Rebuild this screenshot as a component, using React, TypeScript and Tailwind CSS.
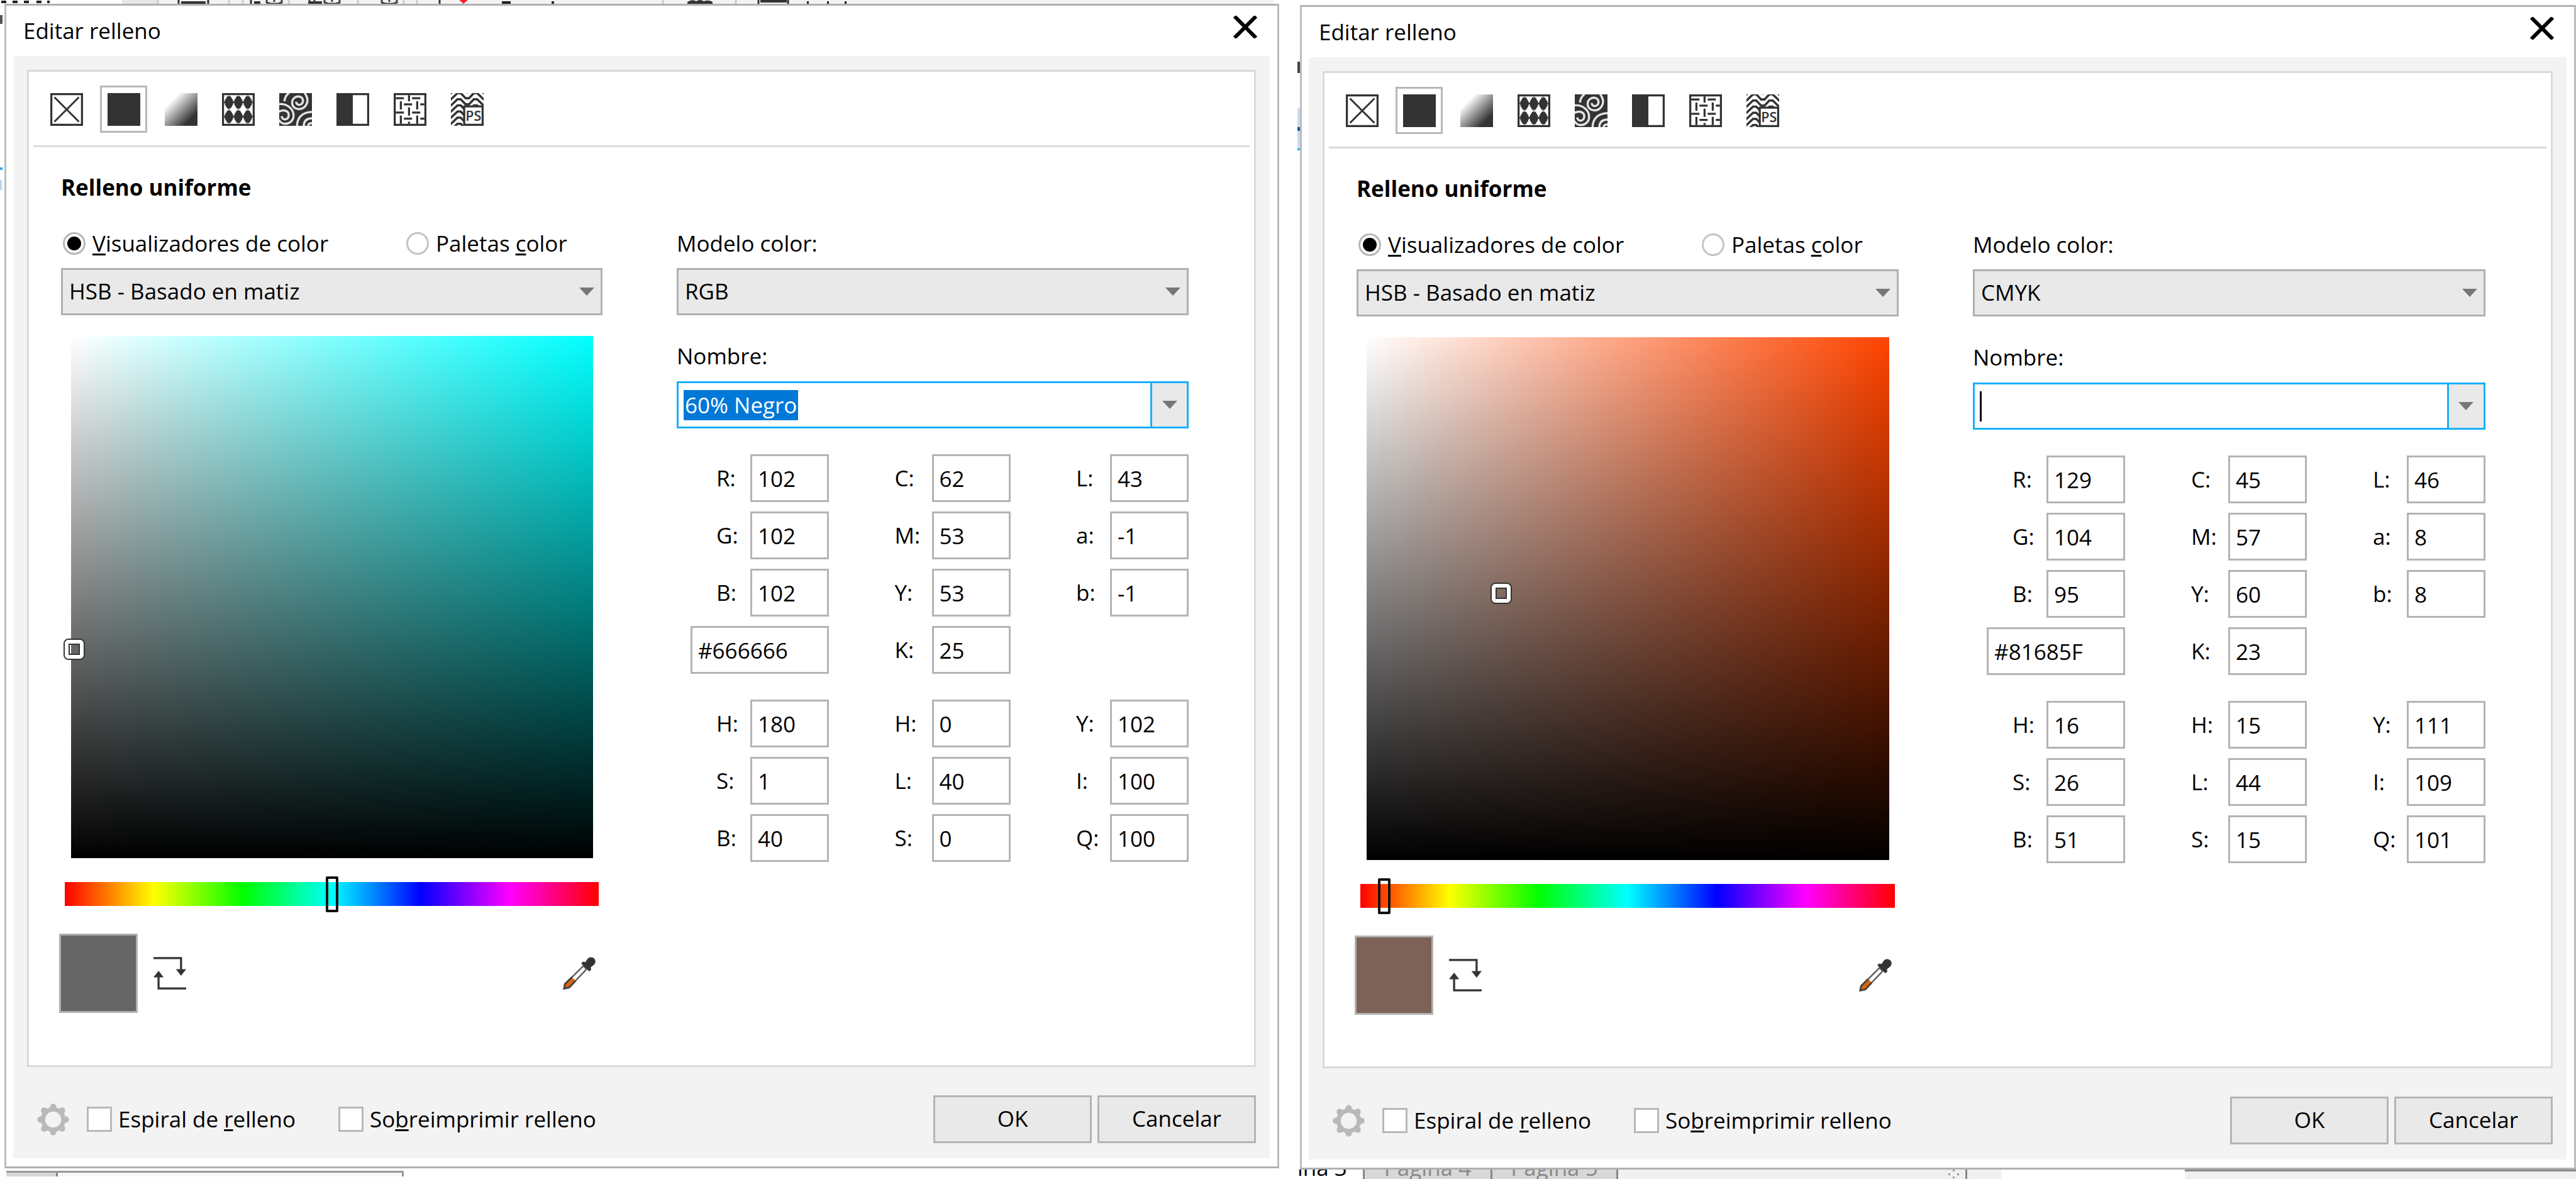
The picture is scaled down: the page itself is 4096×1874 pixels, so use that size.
import React, { useId } from 'react';

const DARK = '#333333';

type Field = { label: string; value: string };

type FillDialogProps = {
  model: string;
  name: string;
  hue: number;
  hueColor: string;
  saturation: number;
  brightness: number;
  swatch: string;
  hex: string;
  rgb: Field[];
  hsb: Field[];
  cmyk: Field[];
  hls: Field[];
  lab: Field[];
  yiq: Field[];
};

function NoFillIcon() {
  return (
    <svg viewBox="0 0 16 16" className="size-[52px]" fill="none" stroke={DARK}>
      <rect x="0.5" y="0.5" width="15" height="15" />
      <path d="M2 2 14 14M14 2 2 14" strokeWidth="0.9" />
    </svg>
  );
}

function UniformIcon() {
  return (
    <svg viewBox="0 0 16 16" className="size-[52px]">
      <rect width="16" height="16" fill={DARK} />
    </svg>
  );
}

function FountainIcon() {
  const id = useId();
  return (
    <svg viewBox="0 0 16 16" className="size-[52px]">
      <defs>
        <linearGradient id={id} x1="0" y1="0" x2="1" y2="1">
          <stop offset="0.22" stopColor="#ffffff" />
          <stop offset="0.5" stopColor="#9a9a9a" />
          <stop offset="0.8" stopColor={DARK} />
        </linearGradient>
      </defs>
      <rect width="16" height="16" fill={`url(#${id})`} />
    </svg>
  );
}

function VectorPatternIcon() {
  const xs = [3.4, 8, 12.6];
  const ys = [4.5, 11.5];
  return (
    <svg viewBox="0 0 16 16" className="size-[52px]">
      <rect x="0.5" y="0.5" width="15" height="15" fill="none" stroke={DARK} />
      {xs.map((x) =>
        ys.map((y) => (
          <path
            key={`${x}-${y}`}
            d={`M${x - 0.8} ${y - 3}h1.6L${x + 2} ${y - 1}v2L${x + 0.8} ${y + 3}h-1.6L${x - 2} ${y + 1}v-2z`}
            fill={DARK}
          />
        )),
      )}
      <path d="M1 4.5h14M1 11.5h14" stroke={DARK} strokeWidth="0.9" />
      <path d="M3.4 1v14M8 1v14M12.6 1v14" stroke={DARK} strokeWidth="0.8" opacity="0.45" />
    </svg>
  );
}

function BitmapPatternIcon() {
  return (
    <svg viewBox="0 0 16 16" className="size-[52px] overflow-hidden" fill="none" stroke="#e4e4e4" strokeWidth="1.05">
      <rect width="16" height="16" fill={DARK} stroke="none" />
      <path d="M2.6 4C2.6 2.4 3.4 1 4.8-.2" />
      <path d="M8.3 4.2c0 1.2 1.3 1.9 2.3 1.3 1.5-.9 1.3-3.1-.3-3.7-2-.7-4 .9-4 2.8 0 2.1 1.7 3.4 3.7 3.2 2.8-.2 4.4-3.2 3.6-5.6C13.3 1.2 12.9.6 12.4-.2" />
      <path d="M-.2 5.4C4 5 7 7.8 7 11c0 2.500-2 4-4 4-1.600 0-2.600-.8-3.200-2" />
      <path d="M1.200 11.300c.1 1.300 1.500 2 2.500 1.300C5 11.700 5 9.600 3.500 8.800 2.300 8.200 1 8.400-.2 9.100" />
      <path d="M8.700 16.200c0-4.400 2.800-7 7.500-7M12 16.200c0-2.500 1.300-3.900 4.200-3.900M14.100 16.200c0-1 .9-1.500 2.100-1.500" />
    </svg>
  );
}

function TwoColorIcon() {
  return (
    <svg viewBox="0 0 16 16" className="size-[52px]">
      <rect x="0.5" y="0.5" width="15" height="15" fill="#ffffff" stroke={DARK} />
      <rect width="8" height="16" fill={DARK} />
    </svg>
  );
}

function TextureIcon() {
  return (
    <svg viewBox="0 0 16 16" className="size-[52px]" fill="none" stroke={DARK}>
      <rect x="0.5" y="0.5" width="15" height="15" />
      <path d="M1 2.500h4M9 2.500h4M5 5.500h4M13 5.500h2M1 9.500h4M9 9.500h4M5 12.500h4M13 12.500h2" />
      <path d="M3.500 4v4M3.500 11v4M7.500 1v3M7.500 7v4M7.500 14v1M11.500 4v4M11.500 11v4" />
    </svg>
  );
}

function PostScriptIcon() {
  const rows = [-1, 2, 5, 8, 11, 14, 17];
  return (
    <svg viewBox="0 0 16 16" className="size-[52px] overflow-hidden">
      {rows.map((y) => (
        <path
          key={y}
          d={`M-1 ${y + 2}L3.2 ${y - 2}h1.6L7.2 ${y + 0.5}h1.6L11.2 ${y - 2}h1.6L17 ${y + 2}`}
          fill="none"
          stroke={DARK}
          strokeWidth="1.1"
        />
      ))}
      <rect x="6.5" y="6.5" width="9" height="9" fill="#ffffff" stroke={DARK} />
      <text x="11" y="13.4" textAnchor="middle" fontSize="6.6" fontFamily="Open Sans" fontWeight="600" fill={DARK}>
        PS
      </text>
    </svg>
  );
}

function SwapIcon() {
  return (
    <svg viewBox="0 0 16 16" className="size-[52px]">
      <path d="M0 .6h13.500V7M16 15.400H2.500V9" fill="none" stroke={DARK} strokeWidth="1" />
      <path d="M11 6h5l-2.500 3.200zM0 10h5L2.500 6.800z" fill={DARK} />
    </svg>
  );
}

function DropperIcon() {
  return (
    <svg viewBox="0 0 16 16" className="size-[52px]">
      <path d="M10 4.400 11.600 6 3.400 14.600 1 15.200 1.400 13z" fill="#ffffff" stroke="#666666" strokeWidth="0.8" />
      <path d="M4.400 9.900 6.200 11.600 3.200 14.700 1 15.200 1.400 13z" fill="#e0640e" />
      <path d="M4.400 9.900 1 13.300.6 15.500 3.100 15 6.200 11.600" fill="none" stroke="#444444" strokeWidth="0.9" />
      <path
        d="M9 3.200 9.700 2.300 11 2.500 12.100.9C12.900-.1 14.500-.1 15.300.8c.9.9.8 2.300-.2 3.100L13.700 5l.1 1.400-.9.7z"
        fill={DARK}
      />
    </svg>
  );
}

function GearIcon() {
  const angles = [0, 45, 90, 135, 180, 225, 270, 315];
  return (
    <svg viewBox="0 0 16 16" className="size-[51px]">
      <circle cx="8" cy="8" r="5.1" fill="none" stroke="#b9b9b9" strokeWidth="2.2" />
      {angles.map((a) => (
        <path key={a} d="M6 3.200 6.700.8Q8-.7 9.300.8L10 3.200z" fill="#b9b9b9" transform={`rotate(${a} 8 8)`} />
      ))}
    </svg>
  );
}

function Arrow() {
  return (
    <svg viewBox="0 0 24 13" className="h-[13px] w-[24px]">
      <path d="M0 0h24L12 13z" fill="#777777" />
    </svg>
  );
}

const fillTypes = [
  { name: 'Sin relleno', Icon: NoFillIcon },
  { name: 'Relleno uniforme', Icon: UniformIcon },
  { name: 'Relleno degradado', Icon: FountainIcon },
  { name: 'Relleno de patrón vectorial', Icon: VectorPatternIcon },
  { name: 'Relleno de patrón de mapa de bits', Icon: BitmapPatternIcon },
  { name: 'Relleno de patrón de dos colores', Icon: TwoColorIcon },
  { name: 'Relleno de textura', Icon: TextureIcon },
  { name: 'Relleno PostScript', Icon: PostScriptIcon },
];

function SelectBox({ id, label, value }: { id: string; label?: string; value: string }) {
  return (
    <div className="relative flex items-center">
      <select
        id={id}
        aria-label={label}
        defaultValue={value}
        className="h-[75px] w-full appearance-none border-3 border-[#b0b0b0] bg-[#e9e9e9] px-[10px] pb-[2px]"
      >
        <option>{value}</option>
      </select>
      <span className="pointer-events-none absolute right-[13px]">
        <Arrow />
      </span>
    </div>
  );
}

function Fields({ items, className }: { items: Field[]; className: string }) {
  const id = useId();
  return (
    <div className="flex flex-col gap-[15px]">
      {items.map((f, i) => (
        <div key={f.label} className="flex justify-end">
          <label htmlFor={`${id}${i}`} className={`flex items-center ${className}`}>
            {f.label}:
          </label>
          <input
            id={`${id}${i}`}
            defaultValue={f.value}
            className="h-[76px] w-[125px] border-3 border-[#b4b4b4] bg-white px-[9px]"
          />
        </div>
      ))}
    </div>
  );
}

function FillDialog(p: FillDialogProps) {
  const id = useId();
  return (
    <div
      role="dialog"
      aria-label="Editar relleno"
      className="flex flex-1 flex-col border-3 border-x-[#bdbdbd] border-y-[#b0b0b0] bg-white"
    >
      <header className="flex h-[80px] items-center justify-between pr-[30px] pl-[27px]">
        <h1>Editar relleno</h1>
        <button type="button" aria-label="Cerrar" className="mb-[12px]">
          <svg viewBox="0 0 42 36" className="h-[36px] w-[42px]">
            <path d="M4 1 38 35M38 1 4 35" stroke="#000000" strokeWidth="6" />
          </svg>
        </button>
      </header>

      <div className="mr-[12px] mb-[13px] ml-[11px] flex flex-1 flex-col bg-[#f3f3f3] px-[22px] pt-[22px]">
        <main className="flex-1 border-3 border-[#dadada] bg-white">
          <div className="mx-[7px] flex gap-4 border-b-3 border-[#dadada] px-[15px] pt-[22px] pb-[20px]">
            {fillTypes.map(({ name, Icon }, i) => (
              <button
                key={name}
                type="button"
                aria-label={name}
                aria-pressed={i === 1}
                className={`flex size-[75px] items-center justify-center ${i === 1 ? 'border-3 border-[#b8b8b8]' : ''}`}
              >
                <Icon />
              </button>
            ))}
          </div>

          <div className="pt-10 pr-[104px] pb-20 pl-[51px]">
            <h2 className="font-bold">Relleno uniforme</h2>
            <div className="mt-[41px] grid grid-cols-[861fr_814fr] gap-x-[118px]">
              <section>
                <div className="flex">
                  <label className="flex w-[549px] items-center gap-[11px] pl-[3px]">
                    <input
                      type="radio"
                      name={`${id}view`}
                      defaultChecked
                      className="flex size-[36px] appearance-none items-center justify-center rounded-full border-3 border-[#b8b8b8] bg-white checked:before:size-[22px] checked:before:rounded-full checked:before:bg-black"
                    />
                    <span>
                      <u className="decoration-3 underline-offset-[3px]">V</u>isualizadores de color
                    </span>
                  </label>
                  <label className="flex items-center gap-[11px]">
                    <input
                      type="radio"
                      name={`${id}view`}
                      className="size-[36px] appearance-none rounded-full border-3 border-[#c4c4c4] bg-white"
                    />
                    <span>
                      Paletas <u className="decoration-3 underline-offset-[3px]">c</u>olor
                    </span>
                  </label>
                </div>
                <div className="mt-[15px]">
                  <SelectBox id={`${id}viewer`} label="Visualizador de color" value="HSB - Basado en matiz" />
                </div>

                <div
                  className="relative mt-[33px] mr-[15px] ml-4 aspect-square"
                  style={{
                    background: `linear-gradient(to top, #000000, transparent), linear-gradient(to right, #ffffff, ${p.hueColor})`,
                  }}
                >
                  <span
                    className="absolute flex size-[34px] -translate-1/2 rounded-lg border-2 border-[#333333]"
                    style={{ left: `${p.saturation}%`, top: `${100 - p.brightness}%` }}
                  >
                    <span className="flex flex-1 rounded-md border-6 border-white">
                      <span className="flex-1 border-2 border-[#333333]" />
                    </span>
                  </span>
                </div>

                <div className="mx-[6px] mt-[38px] flex h-[38px] items-center bg-[linear-gradient(to_right,#ff0000,#ffff00,#00ff00,#00ffff,#0000ff,#ff00ff,#ff0000)]">
                  <input
                    type="range"
                    aria-label="Matiz"
                    min={0}
                    max={360}
                    defaultValue={p.hue}
                    className="-mx-[10px] h-[57px] w-[calc(100%+20px)] shrink-0 appearance-none bg-transparent [&::-webkit-slider-thumb]:h-[57px] [&::-webkit-slider-thumb]:w-[20px] [&::-webkit-slider-thumb]:appearance-none [&::-webkit-slider-thumb]:rounded-xs [&::-webkit-slider-thumb]:border-4 [&::-webkit-slider-thumb]:border-[#111111] [&::-webkit-slider-thumb]:bg-transparent"
                  />
                </div>

                <div className="-ml-[3px] mt-[44px] flex items-center pr-[11px]">
                  <div
                    className="h-[126px] w-[125px] border-3 border-[#b0b0b0]"
                    style={{ backgroundColor: p.swatch }}
                  />
                  <button type="button" aria-label="Intercambiar colores" className="ml-[25px]">
                    <SwapIcon />
                  </button>
                  <button type="button" aria-label="Cuentagotas" className="ml-auto">
                    <DropperIcon />
                  </button>
                </div>
              </section>

              <section>
                <label htmlFor={`${id}model`} className="block">
                  Modelo color:
                </label>
                <div className="mt-[15px]">
                  <SelectBox id={`${id}model`} value={p.model} />
                </div>
                <label htmlFor={`${id}name`} className="mt-[41px] block">
                  Nombre:
                </label>
                <div className="mt-4 flex h-[75px] border-3 border-[#18b0fa] bg-white">
                  <div className="flex flex-1 items-center pl-[8px]">
                    {p.name ? (
                      <input
                        id={`${id}name`}
                        defaultValue={p.name}
                        className="[field-sizing:content] h-[48px] bg-[#0078d7] px-[2px] text-white"
                      />
                    ) : (
                      <>
                        <span className="h-[48px] w-[3px] bg-black" />
                        <input id={`${id}name`} className="h-[48px] flex-1 bg-transparent" />
                      </>
                    )}
                  </div>
                  <button
                    type="button"
                    aria-label="Mostrar nombres"
                    className="flex w-[58px] items-center justify-center border-l-3 border-[#18b0fa] bg-[#e9e9e9]"
                  >
                    <Arrow />
                  </button>
                </div>

                <div className="mt-[41px] ml-[22px] flex justify-between">
                  <div className="flex w-[220px] flex-col">
                    <Fields items={p.rgb} className="w-[54px]" />
                    <input
                      aria-label="Hexadecimal"
                      defaultValue={p.hex}
                      className="mt-[15px] h-[76px] w-full border-3 border-[#b4b4b4] bg-white px-[9px]"
                    />
                    <div className="mt-[41px]">
                      <Fields items={p.hsb} className="w-[54px]" />
                    </div>
                  </div>
                  <div className="flex flex-col gap-[41px]">
                    <Fields items={p.cmyk} className="w-[59px]" />
                    <Fields items={p.hls} className="w-[59px]" />
                  </div>
                  <div className="flex flex-col justify-between">
                    <Fields items={p.lab} className="w-[54px]" />
                    <Fields items={p.yiq} className="w-[54px]" />
                  </div>
                </div>
              </section>
            </div>
          </div>
        </main>

        <footer className="flex items-center pt-[45px] pb-[24px] pl-4">
          <button type="button" aria-label="Opciones">
            <GearIcon />
          </button>
          <label className="ml-[28px] flex items-center gap-[10px]">
            <input type="checkbox" className="size-[40px] appearance-none border-3 border-[#b8b8b8] bg-white" />
            <span>
              Espiral de <u className="decoration-3 underline-offset-[3px]">r</u>elleno
            </span>
          </label>
          <label className="ml-[68px] flex items-center gap-[10px]">
            <input type="checkbox" className="size-[40px] appearance-none border-3 border-[#b8b8b8] bg-white" />
            <span>
              So<u className="decoration-3 underline-offset-[3px]">b</u>reimprimir relleno
            </span>
          </label>
          <div className="ml-auto flex gap-[9px]">
            <button type="button" className="h-[76px] w-[252px] border-3 border-[#b4b4b4] bg-[#e9e9e9] pb-[2px]">
              OK
            </button>
            <button type="button" className="h-[76px] w-[252px] border-3 border-[#b4b4b4] bg-[#e9e9e9] pb-[2px]">
              Cancelar
            </button>
          </div>
        </footer>
      </div>
    </div>
  );
}

function ToolbarEdge() {
  return (
    <div className="mr-[38px] flex h-[6px] bg-[#f3f3f3]">
      <svg viewBox="0 0 1400 6" className="h-[6px] w-[1400px]" aria-hidden="true">
        <rect width="194" height="6" fill="#ffffff" />
        <rect x="194" width="57" height="6" fill="#e6e6e6" />
        <path d="M2 3h8M20 3h8M38 3h8M58 3h8M75 3h4" stroke="#222222" strokeWidth="4" />
        <path d="M251 0v6M364 0v6M386 0v6M459 0v6M569 0v6M642 0v6M663 0v6M1054 0v6M1170 0v6" stroke="#cccccc" strokeWidth="3" />
        <path d="M284 0v6M331 0v6M399 0v6M699 0v6M1206 0v6M1253 0v6" stroke="#333333" strokeWidth="3" />
        <path d="M288 4h39M404 4h10M490 4h22M1209 2h42" stroke="#333333" strokeWidth="4" />
        <path d="M424 0v4l6 2h12l6-2V0M516 0v4l6 2h12l6-2V0M607 0v4l6 2h12l6-2V0M436 0v3M528 0v3M619 0v3M492 0v3M500 0v3" fill="none" stroke="#444444" strokeWidth="3" />
        <path d="M730 0h14l-7 6z" fill="#ff2222" />
        <path d="M798 4h14M877 4h4M1283 4h3M1315 4h3M1343 4h3" stroke="#222222" strokeWidth="4" />
        <path d="M1093 6V3q8-5 14-1 6-4 12 0 8-3 14 1v3z" fill="#333333" />
      </svg>
    </div>
  );
}

export default function App() {
  return (
    <div className="grid min-h-screen w-full grid-cols-[2063fr_2033fr] bg-white font-['Open_Sans',sans-serif] text-[35px] leading-[48px] text-black">
      <section className="flex flex-col">
        <ToolbarEdge />
        <div className="flex flex-1 pr-[29px]">
          <div className="flex w-[7px] flex-col items-start" aria-hidden="true">
            <span className="mt-[18px] h-[14px] w-[4px] bg-[#555555]" />
            <span className="mt-[228px] h-[4px] w-[4px] bg-[#2aa7e8]" />
            <span className="mt-[16px] h-[16px] w-[3px] bg-[#b9d4ee]" />
          </div>
          <FillDialog
            model="RGB"
            name="60% Negro"
            hue={180}
            hueColor="#00ffff"
            saturation={0.6}
            brightness={40}
            swatch="#666666"
            hex="#666666"
            rgb={[
              { label: 'R', value: '102' },
              { label: 'G', value: '102' },
              { label: 'B', value: '102' },
            ]}
            hsb={[
              { label: 'H', value: '180' },
              { label: 'S', value: '1' },
              { label: 'B', value: '40' },
            ]}
            cmyk={[
              { label: 'C', value: '62' },
              { label: 'M', value: '53' },
              { label: 'Y', value: '53' },
              { label: 'K', value: '25' },
            ]}
            hls={[
              { label: 'H', value: '0' },
              { label: 'L', value: '40' },
              { label: 'S', value: '0' },
            ]}
            lab={[
              { label: 'L', value: '43' },
              { label: 'a', value: '-1' },
              { label: 'b', value: '-1' },
            ]}
            yiq={[
              { label: 'Y', value: '102' },
              { label: 'I', value: '100' },
              { label: 'Q', value: '100' },
            ]}
          />
        </div>
        <div className="flex h-[17px] items-start pt-1 pl-[10px]" aria-hidden="true">
          <div className="flex h-[9px] w-[632px] border-t-3 border-r-3 border-[#999999] bg-[#f6f6f6]">
            <span className="w-[82px] border-r-3 border-[#888888] bg-[#d8d8d8]" />
          </div>
        </div>
      </section>

      <section className="flex flex-col">
        <div className="h-[8px]" />
        <div className="flex flex-1">
          <div className="flex w-[4px] flex-col items-start" aria-hidden="true">
            <span className="mt-[90px] h-[18px] w-[4px] bg-[#444444]" />
            <span className="mt-[56px] h-[30px] w-[4px] bg-[#c9dcf3]" />
            <span className="h-[6px] w-[4px] bg-[#1557a8]" />
            <span className="h-[28px] w-[4px] bg-[#c9dcf3]" />
            <span className="h-[3px] w-[4px] bg-[#18b0fa]" />
          </div>
          <FillDialog
            model="CMYK"
            name=""
            hue={16}
            hueColor="#ff4400"
            saturation={25.7}
            brightness={51}
            swatch="#7d6357"
            hex="#81685F"
            rgb={[
              { label: 'R', value: '129' },
              { label: 'G', value: '104' },
              { label: 'B', value: '95' },
            ]}
            hsb={[
              { label: 'H', value: '16' },
              { label: 'S', value: '26' },
              { label: 'B', value: '51' },
            ]}
            cmyk={[
              { label: 'C', value: '45' },
              { label: 'M', value: '57' },
              { label: 'Y', value: '60' },
              { label: 'K', value: '23' },
            ]}
            hls={[
              { label: 'H', value: '15' },
              { label: 'L', value: '44' },
              { label: 'S', value: '15' },
            ]}
            lab={[
              { label: 'L', value: '46' },
              { label: 'a', value: '8' },
              { label: 'b', value: '8' },
            ]}
            yiq={[
              { label: 'Y', value: '111' },
              { label: 'I', value: '109' },
              { label: 'Q', value: '101' },
            ]}
          />
        </div>
        <div className="flex h-[15px] overflow-hidden bg-[#f0f0f0] leading-[36px]">
          <div className="flex w-[104px] items-end bg-white">ina 3</div>
          <div className="flex w-[203px] items-end justify-center border-l-3 border-[#888888] bg-[#d8d8d8] text-[#888888]">
            Página 4
          </div>
          <div className="flex w-[203px] items-end justify-center border-x-3 border-[#888888] bg-[#d8d8d8] text-[#888888]">
            Página 5
          </div>
          <div className="flex w-[555px] justify-end border-r-3 border-[#888888] pr-[9px]">
            <svg viewBox="0 0 18 15" className="h-[15px] w-[18px]" aria-hidden="true">
              <path d="M0 6h3v3H0zM14 6h3v3h-3zM7 0h3v3H7zM7 11h3v3H7z" fill="#999999" />
            </svg>
          </div>
          <div className="ml-[54px] w-[292px] bg-white" />
          <div className="flex-1 border-t-3 border-[#8a8a8a]" />
        </div>
      </section>
    </div>
  );
}
